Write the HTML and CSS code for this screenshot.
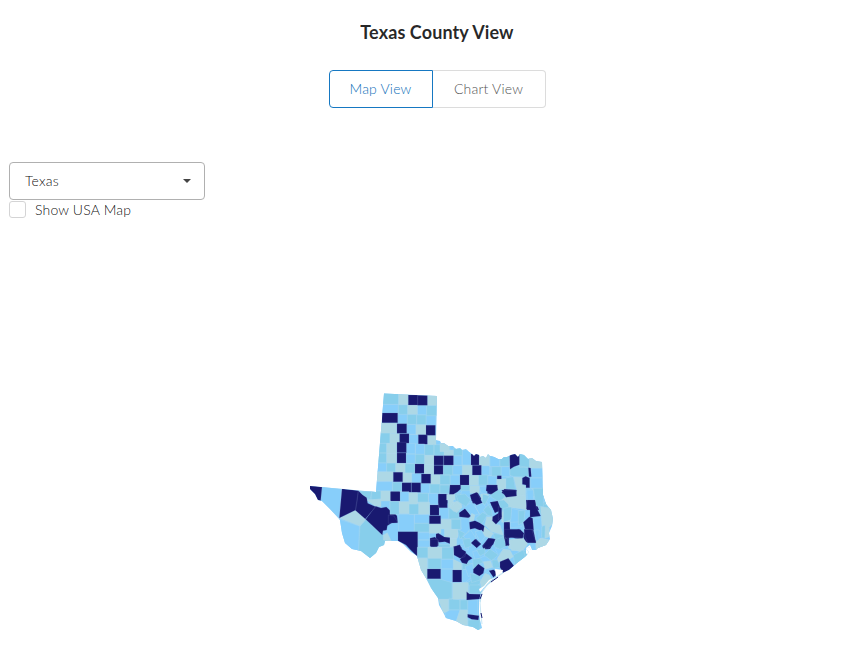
FILE: index.html
```html
<!DOCTYPE html>
<html lang="en">
<head>
<meta charset="utf-8">
<title>Texas County View</title>
<link rel="stylesheet" href="styles.css">
</head>
<body>
<header class="header">
  <h1 class="title">Texas County View</h1>
  <div class="toggle">
    <button class="toggle-item active">Map View</button>
    <button class="toggle-item">Chart View</button>
  </div>
</header>
<section class="controls">
  <div class="select"><span>Texas</span><i class="caret"></i></div>
  <label class="check"><span class="box"></span><span>Show USA Map</span></label>
</section>
<main class="map">
<svg viewBox="300 385 260 255" width="260" height="255">
  <defs>
    <clipPath id="state"><path d="M384 393.5 437 396 436 440 440 441 441 443 444 443 448 446 453 446 456 449 460 448 462 450 466 449 469 452 472 454 474 456 476 454 479 455 480 457 483 456 486 458 488 454 490 456 494 457 498 459 502 459 504 457 507 457 511 455 515 454 518 457 520 454 524 455 528 459 532 458 536 461 542 462 543 495 546 504 551 510 553 519 552 526 549 533 550 539 546 545 538 548 536 550 531 550 529 547 526 549 529 552 526 556 517 563 509 570 500 574 496 577 490 583 485 587 481 593 479 602 479 613 480 620 482 628 478 630 473 627 463 625 456 621 446 618 443 612 439 605 438 598 431 588 427 580 421 570 417 556 411 552 403 544 398 541 385 541 384 545 379 547 376 553 370 558 361 551 352 549 345 543 342 533 340 520 330 509 322 501 318 500 315 494 310 489 310 486 376 492Z"/></clipPath>
  </defs>
  <g clip-path="url(#state)">
    <path class="a" d="M300 385H560V640H300Z"/>
    <!-- Panhandle -->
    <g transform="translate(370 385) scale(.33333)">
      <path class="a" d="M36 58H85V86H36ZM142 60H170V90H142ZM83 86H112V117H83ZM168 92H198V121H168ZM110 118H138V148H110ZM117 148H145V178H117Z"/>
      <path class="b" d="M36 20H86V58H36ZM85 59H113V88H85ZM170 61H200V92H170ZM112 88H140V118H112ZM140 90H168V119H140ZM28 144H60V175H28Z"/>
      <path class="c" d="M86 26H115V59H86ZM172 30H202V61H172ZM113 60H142V88H113ZM30 114H80V144H30ZM138 119H168V149H138ZM60 145H88V175H60ZM172 151H198V181H172Z"/>
      <path class="d" d="M115 30H143V60H115ZM143 31H172V61H143ZM36 84H83V113H36ZM81 116H110V145H81ZM168 121H196V151H168ZM89 146H117V176H89ZM145 149H172V178H145Z"/>
    </g>
    <!-- South Plains -->
    <g transform="translate(370 440) scale(.33333)">
      <path class="a" d="M108 10H136V42H108ZM108 42H136V70H108ZM136 12H164V43H136ZM20 69H50V96H20ZM125 100H153V129H125ZM16 125H68V153H16ZM152 131H180V160H152ZM210 132H240V162H210ZM232 162H262V190H232Z"/>
      <path class="b" d="M24 10H50V39H24ZM24 39H50V68H24ZM164 14H192V46H164ZM136 43H164V72H136ZM50 69H77V97H50ZM105 71H134V99H105ZM210 104H240V132H210ZM68 127H95V155H68ZM180 132H210V161H180ZM0 155H32V180H0ZM145 160H174V190H145ZM192 14H240V46H192Z"/>
      <path class="c" d="M50 10H80V40H50ZM50 40H80V69H50ZM164 46H192V74H164ZM77 70H105V98H77ZM162 74H192V102H162ZM18 95H70V124H18ZM97 99H125V128H97ZM182 103H210V132H182ZM32 154H60V180H32ZM88 156H116V180H88ZM116 158H145V190H116ZM174 161H203V190H174Z"/>
      <path class="d" d="M81 7H109V38H81ZM81 39H108V69H81ZM192 47H220V75H192ZM221 47H250V76H221ZM192 76H220V103H192ZM135 72H162V100H135ZM70 97H98V125H70ZM154 102H182V130H154ZM96 128H123V157H96ZM124 128H152V157H124ZM61 155H88V181H61ZM204 163H232V190H204Z"/>
    </g>
    <!-- Trans-Pecos -->
    <g transform="translate(300 480) scale(.33333)">
      <path class="a" d="M66 20 125 27 118 115 62 62ZM118 118 178 138 176 230 90 200Z"/>
      <path class="b" d="M180 138 198 118 247 164 270 180 210 240 175 232ZM215 33H243V57L215 60ZM180 35 215 33 210 60 195 50Z"/>
      <path class="c" d="M119 115 166 90 198 118 180 138ZM243 33H271V63H243ZM200 60 243 57V80L225 78ZM270 64H300V95L270 88ZM250 165 262 158 275 185 250 180Z"/>
      <path class="d" d="M28 15 66 21 62 62 50 60 25 28ZM126 26 175 32 172 60 167 90 118 114ZM175 32 187 44 200 53 203 70 227 80 196 117 166 91ZM227 79 243 84 259 81 271 92 283 98 291 108 293 127 276 128 262 137 260 150 249 152 247 165 197 118Z"/>
    </g>
    <!-- Concho Valley and Hill Country -->
    <g transform="translate(390 490) scale(.33333)">
      <path class="a" d="M30 5H57V35H30ZM115 10H145V43H115ZM148 53H177V85H148ZM26 73H73V123H26ZM73 73H118V100H73ZM84 128H119V150H84ZM84 150H119V172H84ZM202 170 235 155 235 180 214 170Z"/>
      <path class="b" d="M0 34H28V73H0ZM82 10H115V36H82ZM57 42H87V73H57ZM177 54H207V87H177ZM190 12 215 8 225 30 200 38ZM183 87H210V117H183ZM73 100H118V126H73ZM204 120 235 110 235 150 212 145ZM83 172H115V206H83ZM155 172H190V206H155ZM145 163H182V172H145Z"/>
      <path class="c" d="M57 8H82V42H57ZM28 35H57V71H28ZM86 37H119V73H86ZM187 37 212 32 217 52 200 68 180 53ZM118 101H153V130H118ZM153 88H183V117H153ZM163 117H204V142H163ZM115 172H155V207H115ZM175 12H190V53H175Z"/>
      <path class="d" d="M2 5H30V33H2ZM145 12H172V53H145ZM120 45H147V76H120ZM118 77H152V101H118ZM24 125H83V200L62 180 48 165 24 152ZM138 132 145 130 163 141 183 143 182 162 165 155 148 157 138 150ZM120 145 135 141 145 152 145 167 130 170 120 168ZM-5 75 12 78 23 98-5 100ZM208 70 225 57 240 72 238 82 213 80Z"/>
    </g>
    <!-- North Texas -->
    <g transform="translate(440 440) scale(.33333)">
      <path class="a" d="M40 47H66V76H40ZM67 30H93V75H67ZM38 76H67V105H38ZM148 48H178V80H148ZM125 77H150V106H125ZM150 78H180V107H150ZM30 105H60V135H30ZM143 107H172V135H143ZM65 152 85 145 100 163 80 178 60 170ZM118 140 145 138 140 162 122 158Z"/>
      <path class="b" d="M40 25H67V47H40ZM178 52H208V82H178ZM10 76H38V105H10ZM0 105H30V134H0ZM115 105H143V135H115ZM180 80H210V108H180ZM62 136H90V152H62ZM165 162 185 150 202 160 185 180 160 177ZM0 135H29V160H0Z"/>
      <path class="c" d="M0 10H28V35H0ZM12 30H40V47H12ZM117 44H148V77H117ZM67 76H97V105H67ZM88 106H115V136H88ZM170 117H197V148H170ZM90 137H118V160H90ZM122 162H145V180H122ZM20 163H45V180H20Z"/>
      <path class="d" d="M12 47H40V75H12ZM93 42H117V75H93ZM97 76H124V105H97ZM60 105H87V135H60ZM30 135H62V147L52 156 40 163H28ZM172 107H183V117H172ZM145 135H170L174 150 160 165 142 160ZM95 165 113 158 123 175 120 190 98 190Z"/>
    </g>
    <!-- Northeast Texas -->
    <g transform="translate(490 450) scale(.33333)">
      <path class="a" d="M0 10H30V50H0ZM124 55H162V83H124ZM122 84H158V115H122ZM33 50H60V80H33ZM108 115H128V150H108ZM130 140 165 138V170H140Z"/>
      <path class="b" d="M30 15H58V49H30ZM88 10H119V52H88ZM5 50H33V78H5ZM60 54 88 48 115 52V80H72L60 76ZM47 84 70 80 76 117H47ZM128 115H162V142L128 140ZM5 127 25 120 48 132 38 148 18 155 2 147ZM145 168 165 155 180 180 150 190Z"/>
      <path class="c" d="M118 20H162V54H118ZM71 81 97 82 97 104 107 107V172L80 175 48 168 35 150 50 138 79 136 80 119ZM22 87H47V118H25Z"/>
      <path class="d" d="M59 12H88V44L72 50 60 58ZM115 53 122 54 124 80H117ZM97 84 107 79 119 84V113H108V105L97 103ZM22 77H34V87H22ZM43 117 80 120 78 136 50 138 35 128ZM-10 105H22V121L5 132-12 122ZM108 150 135 153 141 165 147 180H110ZM0 157 20 154 33 180 15 188Z"/>
    </g>
    <!-- Central Texas -->
    <g transform="translate(450 490) scale(.33333)">
      <path class="a" d="M32 85 57 83 60 118 40 140 20 118 34 118ZM75 48 98 40 115 60 90 75ZM40 50 65 38 75 50 88 72 62 78ZM40 140 62 120 78 145 62 158ZM105 25 122 20 143 33 115 45ZM82 120 105 122 92 148 75 140Z"/>
      <path class="b" d="M5 88H32V118H5ZM18 15 45 12 62 30 48 50 25 35ZM78 85 98 67 112 75 95 103 85 94ZM98 12 118 18 105 45 97 38ZM22 118 45 130 30 148ZM145 32 162 30 180 48 178 60 155 62ZM38 148 60 145 65 168 45 175ZM130 130 160 135 155 160 135 148ZM115 45 125 62 127 80 112 75 100 60Z"/>
      <path class="c" d="M0 53 20 35 35 50 12 65ZM0 118H22V145H0ZM110 80 127 80 138 103 150 105 160 135 125 125 104 105ZM65 70 75 75 70 95 58 92ZM155 65 180 62 178 95 155 97ZM0 145H20V170H0ZM102 110 130 130 120 145 95 135Z"/>
      <path class="d" d="M60 15 80 7 97 38 80 45 65 32ZM28 68 45 56 62 78 55 83 28 80ZM58 97 75 92 88 98 103 108 100 125 75 115 60 118ZM120 37 143 33 153 60 135 68 128 52ZM128 80 152 65 155 85 138 103 127 92ZM64 160 78 147 93 162 80 173ZM97 167 115 145 137 148 128 163 120 177 100 178ZM162 97H180V135H162ZM162 135 177 137V165L165 160ZM10 170 28 166 35 173 37 188 30 200 12 192Z"/>
    </g>
    <!-- Southeast Texas -->
    <g transform="translate(500 490) scale(.33333)">
      <path class="a" d="M80 0H100V30H82ZM35 55 75 65 65 110 30 113ZM100 85 126 83V145L105 150ZM30 97 70 95 70 123H32Z"/>
      <path class="b" d="M100-5 130-5 130 50 108 48ZM10 55 35 50 32 90 10 97ZM55 62 75 62 72 95 55 105ZM126 110 136 105 135 145 125 143ZM60 185 80 180 85 200 60 212ZM135 15 145 35 135 45Z"/>
      <path class="c" d="M30 25 50 18 75 15 80 60 50 54 25 50ZM122 50 160 55 160 100 148 112 148 140 135 145 136 105 126 108ZM30 150 65 145 80 165 60 185 25 175ZM107 155 125 145 150 150 140 165 108 180Z"/>
      <path class="d" d="M5 0H47L50 18 18 22ZM82 30H105L108 50 122 78 90 82 90 60 79 57ZM70 97 88 80 98 85 101 120 75 118ZM75 120H100L108 158 75 157 70 140ZM12 98 27 97 30 120 42 125 55 118 70 130 65 147 45 145 22 138H12ZM12 135 28 140 25 150 27 167 15 162ZM-5 50 5 55 5 80-5 90Z"/>
    </g>
    <!-- South Texas -->
    <g transform="translate(410 540) scale(.33333)">
      <path class="a" d="M93 58H130V87H93ZM93 87H128V127H93ZM110 210H150L138 246H100ZM173 180H203V225H173ZM157 90 180 85 188 110 165 128H157Z"/>
      <path class="b" d="M22 22H54V53H22ZM95 22H130V57H95ZM54 55H93V87H54ZM50 118H92L126 128V178H80ZM117 174 150 180V209H117ZM150 180H173V209H150ZM174 240H210V272H174ZM158 70 185 70 182 88 157 88ZM172 128 205 110 215 125 198 142 178 140Z"/>
      <path class="c" d="M54 22H95V54H54ZM15 55H52V118H20ZM130 58 155 70 155 90H130ZM128 128H172L170 178H128ZM85 178H116V212L100 220ZM150 210H173V262L138 246Z"/>
      <path class="d" d="M62-2H84L82 20H62ZM52 87H92V116H52ZM128 90H155V126H128ZM132 20 150 14 153 26 168 35 165 50 150 55 132 45ZM150 58 168 40 187 55 175 62 170 72 156 68Z"/>
    </g>
    <!-- Gulf Coast -->
    <g transform="translate(460 530) scale(.33333)">
      <path class="a" d="M38 65 65 58 75 78 45 90ZM15 110 38 100 45 130 25 140ZM105 58 125 45 130 60 115 73ZM75 118 98 110 115 122 88 122 80 130ZM45 5 65 0 75 20 62 38ZM225 0 238 0 236 32 228 30Z"/>
      <path class="b" d="M160 75 190 60 198 88 165 107ZM72 75 90 57 115 75 95 92ZM105 30 130 20 140 48 120 58 103 50ZM38 88 60 85 70 97 55 103 40 115ZM95 90 115 90 120 112 100 115ZM50 60 75 55 75 70 60 78ZM28 165 60 165 65 190 28 190ZM30 130 60 138 60 150 35 158Z"/>
      <path class="c" d="M112 85 130 57 150 60 160 80 145 90 115 97ZM148 30 190 25 203 42 190 60 155 62ZM70 95 92 92 98 112 75 118ZM60 155 75 130 88 135 98 152 65 175ZM230 40 240 25 265 30 255 50 235 55ZM0 158H25V205H0Z"/>
      <path class="d" d="M34 38 45 28 62 42 50 53ZM68 50 85 25 105 27 100 43 82 57ZM133-2H180L192 10 188 25 165 22 135 25ZM135 22 142 28 148 45 137 48ZM192-2H215L228 38 203 38 195 20ZM40 118 55 102 73 115 70 130 58 138 40 128ZM87 122 100 119 115 130 100 142ZM120 95 145 85 162 108 150 118 130 130 120 112ZM20 185 28 192 62 193 58 207 20 210ZM23 253 57 257 55 270 35 268 23 262Z"/>
    </g>
    <!-- Bays and lagoons -->
    <path class="water" d="M495 569 503 570 502 574 497 577 491 580 487 584 482 590 480 592 479 589 484 586 489 580 496 577ZM526 548 530 545 532 550 535 550 532 554 528 556 526 553Z"/>
  </g>
  <path class="isle" d="M503 573 494 579 488 584 482 592 480 602"/>
  <path class="isle" d="M482 593 480 603 481 615 482 624"/>
  <path class="isle-dark" d="M491 582 498 577M482 594 480 599M481 613 482 618"/>
</svg>
</main>
</body>
</html>
```
FILE: styles.css
```css
* { box-sizing: border-box; }
body {
  margin: 0;
  background: #fff;
  color: rgba(0, 0, 0, .95);
  font: 300 14px/20px Lato, "Liberation Sans", sans-serif;
  letter-spacing: .18px;
}
.header {
  display: flex;
  flex-direction: column;
  align-items: center;
  padding: 20px 0 0 24px;
}
.title {
  margin: 0 0 26px;
  color: rgba(0, 0, 0, .85);
  font-size: 18px;
  line-height: 24px;
  font-weight: 700;
  letter-spacing: .1px;
}
.toggle { display: flex; }
.toggle-item {
  width: 113px;
  height: 38px;
  padding: 0;
  border: 1px solid #dcdcdc;
  border-left: 0;
  border-radius: 0 4px 4px 0;
  background: #fff;
  color: #555;
  font: inherit;
  letter-spacing: inherit;
}
.toggle-item.active {
  width: 104px;
  border: 1px solid #1678c2;
  border-radius: 4px 0 0 4px;
  color: #0f6fb8;
}
.controls { padding: 54px 0 0 9px; }
.select {
  display: flex;
  align-items: center;
  justify-content: space-between;
  width: 196px;
  height: 38px;
  padding: 0 13px 0 15px;
  border: 1px solid #b0b0b0;
  border-radius: 4px;
}
.caret {
  border: 4px solid transparent;
  border-top-color: #444;
  border-bottom: 0;
}
.check {
  display: flex;
  align-items: center;
  gap: 9px;
  height: 20px;
}
.box {
  width: 17px;
  height: 17px;
  margin-bottom: 2px;
  border: 1px solid #d4d4d5;
  border-radius: 3px;
}
.map { padding: 165px 0 0 300px; }
.map svg { display: block; }
.a, .b, .c, .d { stroke: #b4dcf0; stroke-width: 1; }
.a { fill: #87cefa; }
.b { fill: #87ceeb; }
.c { fill: #add8e6; }
.d { fill: #191970; stroke: #6f80b8; stroke-width: .6; }
.water { fill: #fff; }
.isle { fill: none; stroke: #b8e0f2; stroke-width: .8; }
.isle-dark { fill: none; stroke: #191970; stroke-width: 1; }
```
